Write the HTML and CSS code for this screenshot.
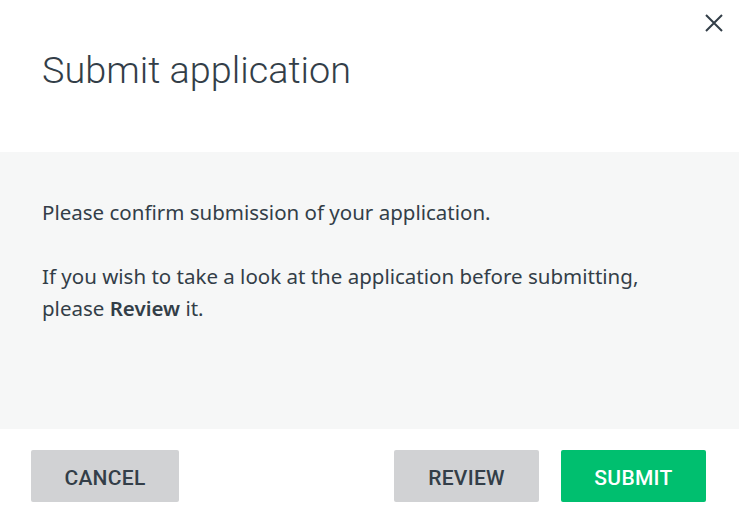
FILE: index.html
```html
<!DOCTYPE html>
<html lang="en">
<head>
<meta charset="utf-8">
<title>Submit application</title>
<link rel="stylesheet" href="styles.css">
</head>
<body>
<div class="modal">
  <header class="modal-header">
    <h1 class="modal-title">Submit application</h1>
    <button class="close-btn" aria-label="Close">
      <svg width="20" height="20" viewBox="0 0 20 20"><path d="M2 2 L18 18 M18 2 L2 18" stroke="#333e48" stroke-width="2" fill="none"/></svg>
    </button>
  </header>
  <section class="modal-body">
    <p>Please confirm submission of your application.</p>
    <p>If you wish to take a look at the application before submitting,<br>please <strong>Review</strong> it.</p>
  </section>
  <footer class="modal-footer">
    <button class="btn btn-secondary btn-cancel">CANCEL</button>
    <div class="footer-right">
      <button class="btn btn-secondary">REVIEW</button>
      <button class="btn btn-primary">SUBMIT</button>
    </div>
  </footer>
</div>
</body>
</html>
```
FILE: styles.css
```css
html, body {
  margin: 0;
  padding: 0;
  background: #ffffff;
}
body {
  font-family: Roboto, "Liberation Sans", sans-serif;
  color: #333e48;
}
.modal {
  width: 739px;
  height: 524px;
  display: flex;
  flex-direction: column;
}
.modal-header {
  position: relative;
  height: 152px;
  box-sizing: border-box;
  padding: 46px 42px 0;
}
.modal-title {
  margin: 0;
  font-size: 37.8px;
  font-weight: 300;
  line-height: 48px;
  letter-spacing: 0;
}
.close-btn {
  position: absolute;
  top: 13px;
  right: 15px;
  width: 20px;
  height: 20px;
  padding: 0;
  border: 0;
  background: transparent;
  display: flex;
}
.modal-body {
  background: #f6f7f7;
  height: 277px;
  box-sizing: border-box;
  padding: 44px 42px 0;
  font-family: "Noto Sans", Roboto, sans-serif;
  font-size: 20.5px;
  line-height: 32px;
}
.modal-body p {
  margin: 0 0 32px;
}
.modal-body strong {
  font-weight: 600;
}
.modal-footer {
  flex: 1;
  display: flex;
  justify-content: space-between;
  align-items: flex-start;
  padding: 21px 33px 0 31px;
}
.footer-right {
  display: flex;
  gap: 22px;
}
.btn {
  height: 52px;
  width: 145px;
  border: 0;
  border-radius: 2px;
  font-family: Roboto, "Liberation Sans", sans-serif;
  font-size: 21px;
  font-weight: 500;
  letter-spacing: 0.3px;
  color: #333e48;
  padding: 3px 0 0;
}
.btn-cancel {
  width: 148px;
}
.btn-secondary {
  background: #d1d2d4;
}
.btn-primary {
  background: #00bf6f;
  color: #ffffff;
}
```
